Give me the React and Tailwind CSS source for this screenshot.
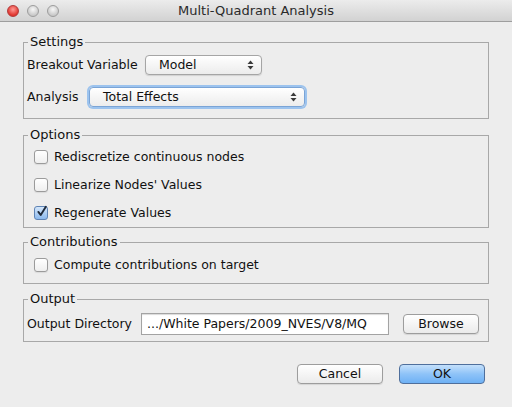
import React from 'react';

const font = { fontFamily: '"DejaVu Sans", "Liberation Sans", sans-serif' };

const Arrows = () => (
  <svg width="7" height="10" viewBox="0 0 7 10" className="shrink-0">
    <path d="M3.5 0.5 L6.5 4 L0.5 4 Z" fill="#3a3a3a" />
    <path d="M3.5 9.5 L6.5 6 L0.5 6 Z" fill="#3a3a3a" />
  </svg>
);

const Select = ({ value, className, focused }) => (
  <div
    className={
      'flex h-[20px] shrink-0 items-center justify-between rounded-[4px] border bg-gradient-to-b from-white to-[#ececec] pl-[13px] pr-[7px] ' +
      (focused
        ? 'border-[#7aa4d6] shadow-[0_0_0_2px_#9cc3ee] '
        : 'border-[#a5a5a5] shadow-[0_1px_1px_rgba(0,0,0,0.12)] ') +
      className
    }
  >
    <span>{value}</span>
    <Arrows />
  </div>
);

const Check = ({ checked, label }) => (
  <label className="flex h-[20px] items-center">
    {checked ? (
      <span className="ml-[10px] mr-[6px] flex h-[14px] w-[14px] items-center justify-center rounded-[3px] border border-[#5f84b5] bg-gradient-to-b from-[#d4e6fa] to-[#8bb9ee]">
        <svg width="14" height="15" viewBox="0 0 14 15" className="-mt-[4px] ml-[1px]">
          <path d="M3 8 L6 12 L12.5 1.5" fill="none" stroke="#1f2a3a" strokeWidth="2.4" strokeLinecap="round" strokeLinejoin="round" />
        </svg>
      </span>
    ) : (
      <span className="ml-[10px] mr-[6px] h-[14px] w-[14px] rounded-[3px] border border-[#9b9b9b] bg-gradient-to-b from-white to-[#efefef] shadow-[0_1px_1px_rgba(0,0,0,0.08)]" />
    )}
    <span>{label}</span>
  </label>
);

const Group = ({ title, className, children }) => (
  <fieldset className={'mx-[23px] border border-[#a8a8a8] ' + className}>
    <legend className="ml-[4px] px-[2px] text-[13px] leading-[16px]">{title}</legend>
    {children}
  </fieldset>
);

const Button = ({ children, primary, className = 'w-[86px]' }) => (
  <button
    className={
      'h-[20px] rounded-[4px] border leading-[18px] ' +
      className +
      (primary
        ? ' border-[#4f6f9c] bg-gradient-to-b from-[#c4e0fb] via-[#8ec3f8] to-[#6eb1f5]'
        : ' border-[#9d9d9d] bg-gradient-to-b from-white to-[#ebebeb] shadow-[0_1px_1px_rgba(0,0,0,0.1)]')
    }
  >
    {children}
  </button>
);

export default function App() {
  return (
    <div className="h-[407px] w-[512px] overflow-hidden bg-[#ededed] text-[12.5px] text-[#111]" style={font}>
      <div className="relative flex h-[22px] items-center justify-center border-b border-[#9e9e9e] bg-gradient-to-b from-[#ececec] to-[#d2d2d2]">
        <div className="absolute left-[7px] top-[5px] flex gap-[8px]">
          <span className="h-[12px] w-[12px] rounded-full border border-[#b13a3a] bg-[radial-gradient(circle_at_50%_35%,#ff9a95,#e0342d_70%)]" />
          <span className="h-[12px] w-[12px] rounded-full border border-[#9d9d9d] bg-[radial-gradient(circle_at_50%_35%,#f7f7f7,#c9c9c9_70%)]" />
          <span className="h-[12px] w-[12px] rounded-full border border-[#9d9d9d] bg-[radial-gradient(circle_at_50%_35%,#f7f7f7,#c9c9c9_70%)]" />
        </div>
        <span className="text-[13px] text-[#2a2a2a]">Multi-Quadrant Analysis</span>
      </div>

      <Group title="Settings" className="mt-[12px] pb-[11px]">
        <div className="mt-[5px] flex h-[20px] items-center pl-[3px]">
          <span className="w-[118px] shrink-0 whitespace-nowrap">Breakout Variable</span>
          <Select value="Model" className="w-[117px]" />
        </div>
        <div className="mt-[12px] flex h-[20px] items-center pl-[3px]">
          <span className="w-[62px] shrink-0 whitespace-nowrap">Analysis</span>
          <Select value="Total Effects" className="w-[216px]" focused />
        </div>
      </Group>

      <Group title="Options" className="mt-[8px] pb-[4px]">
        <div className="mt-[4px] flex flex-col gap-[8px]">
          <Check label="Rediscretize continuous nodes" />
          <Check label="Linearize Nodes' Values" />
          <Check label="Regenerate Values" checked />
        </div>
      </Group>

      <Group title="Contributions" className="mt-[6px] pb-[8px]">
        <div className="mt-[5px]">
          <Check label="Compute contributions on target" />
        </div>
      </Group>

      <Group title="Output" className="mt-[7px] pb-[6px]">
        <div className="mt-[6px] flex h-[22px] items-center pl-[3px]">
          <span className="w-[114px] shrink-0 whitespace-nowrap">Output Directory</span>
          <div className="flex h-[22px] w-[248px] shrink-0 items-center whitespace-nowrap border border-[#a3a3a3] bg-white pl-[5px] shadow-[inset_0_1px_1px_rgba(0,0,0,0.15)]">
            .../White Papers/2009_NVES/V8/MQ
          </div>
          <div className="ml-[14px] shrink-0">
            <Button className="w-[76px]">Browse</Button>
          </div>
        </div>
      </Group>

      <div className="mr-[27px] mt-[22px] flex justify-end gap-[16px]">
        <Button>Cancel</Button>
        <Button primary>OK</Button>
      </div>
    </div>
  );
}
